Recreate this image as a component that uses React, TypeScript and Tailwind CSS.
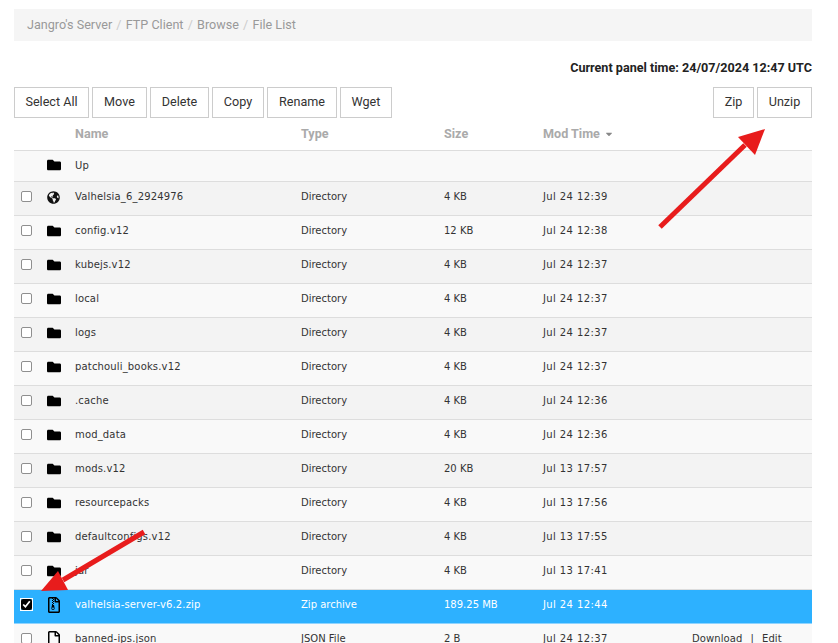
import React from "react";
import { FaFolder, FaGlobeAmericas, FaRegFileArchive, FaRegFile, FaCaretDown } from "react-icons/fa";

type Row = { name: string; type: string; size: string; time: string; icon: "folder" | "globe" | "zip" | "file"; selected?: boolean; actions?: boolean };

const rows: Row[] = [
  { name: "Valhelsia_6_2924976", type: "Directory", size: "4 KB", time: "Jul 24 12:39", icon: "globe" },
  { name: "config.v12", type: "Directory", size: "12 KB", time: "Jul 24 12:38", icon: "folder" },
  { name: "kubejs.v12", type: "Directory", size: "4 KB", time: "Jul 24 12:37", icon: "folder" },
  { name: "local", type: "Directory", size: "4 KB", time: "Jul 24 12:37", icon: "folder" },
  { name: "logs", type: "Directory", size: "4 KB", time: "Jul 24 12:37", icon: "folder" },
  { name: "patchouli_books.v12", type: "Directory", size: "4 KB", time: "Jul 24 12:37", icon: "folder" },
  { name: ".cache", type: "Directory", size: "4 KB", time: "Jul 24 12:36", icon: "folder" },
  { name: "mod_data", type: "Directory", size: "4 KB", time: "Jul 24 12:36", icon: "folder" },
  { name: "mods.v12", type: "Directory", size: "20 KB", time: "Jul 13 17:57", icon: "folder" },
  { name: "resourcepacks", type: "Directory", size: "4 KB", time: "Jul 13 17:56", icon: "folder" },
  { name: "defaultconfigs.v12", type: "Directory", size: "4 KB", time: "Jul 13 17:55", icon: "folder" },
  { name: "jar", type: "Directory", size: "4 KB", time: "Jul 13 17:41", icon: "folder" },
  { name: "valhelsia-server-v6.2.zip", type: "Zip archive", size: "189.25 MB", time: "Jul 24 12:44", icon: "zip", selected: true },
  { name: "banned-ips.json", type: "JSON File", size: "2 B", time: "Jul 24 12:37", icon: "file", actions: true },
];

function Icon({ kind }: { kind: Row["icon"] }) {
  if (kind === "folder") return <FaFolder className="w-[14px] h-[14px] text-black" />;
  if (kind === "globe") return <FaGlobeAmericas className="w-[13px] h-[13px] text-[#111]" />;
  if (kind === "zip") return <FaRegFileArchive className="w-[14px] h-[16px] text-black" />;
  return <FaRegFile className="w-[14px] h-[16px] text-black" />;
}

function Btn({ label, w }: { label: string; w: string }) {
  return (
    <button className={`h-[31px] ${w} border border-[#ccc] bg-white text-[12.6px] text-[#333] pb-[1px] flex items-center justify-center`}>
      {label}
    </button>
  );
}

function Cells({ row, index }: { row: Row; index: number }) {
  const text = row.selected ? "text-white" : "text-[#333]";
  return (
    <div
      className={`h-[34px] shrink-0 flex items-center border-b pb-[4px] font-['DejaVu_Sans',sans-serif] text-[10px] ${text} ${
        row.selected ? "bg-[#2db1ff] border-[#8fd4ff]" : index % 2 === 0 ? "bg-[#f3f3f3] border-[#ddd]" : "bg-[#f9f9f9] border-[#ddd]"
      }`}
    >
      <div className="w-[33px] pl-[7px] flex items-center">
        {row.selected ? (
          <input type="checkbox" readOnly checked className="w-[11px] h-[11px] m-0 accent-black outline outline-1 outline-white" />
        ) : (
          <input type="checkbox" readOnly checked={false} className="w-[11px] h-[11px] m-0 appearance-none bg-white border border-[#8f8f8f] rounded-[2px]" />
        )}
      </div>
      <div className="w-[28px] flex justify-start mt-[1px]"><Icon kind={row.icon} /></div>
      <div className="w-[226px] whitespace-nowrap tracking-[0.16px]">{row.name}</div>
      <div className="w-[143px] whitespace-nowrap">{row.type}</div>
      <div className="w-[99px] whitespace-nowrap">{row.size}</div>
      <div className="w-[149px] whitespace-nowrap tracking-[0.4px]">{row.time}</div>
      {row.actions && (
        <div className="whitespace-nowrap flex gap-[8px] tracking-[0.1px]"><span>Download</span><span>|</span><span>Edit</span></div>
      )}
    </div>
  );
}

export default function App() {
  return (
    <div className="relative h-screen overflow-hidden bg-white pl-[14px] pr-[26px] pt-[9px] font-['Roboto',sans-serif] flex flex-col">
      <div className="h-[32px] shrink-0 bg-[#f5f5f5] px-[13px] flex items-center text-[12.6px] text-[#999] whitespace-nowrap">
        <span>Jangro's Server</span>
        <span className="mx-[4.2px] text-[#ccc]">/</span>
        <span>FTP Client</span>
        <span className="mx-[4.2px] text-[#ccc]">/</span>
        <span>Browse</span>
        <span className="mx-[4.2px] text-[#ccc]">/</span>
        <span>File List</span>
      </div>

      <div className="mt-[17px] h-[20px] shrink-0 flex items-center justify-end text-[12.6px] font-bold text-[#222]">
        Current panel time: 24/07/2024 12:47 UTC
      </div>

      <div className="mt-[9px] shrink-0 flex justify-between">
        <div className="flex gap-[3px]">
          <Btn label="Select All" w="w-[75px]" />
          <Btn label="Move" w="w-[55px]" />
          <Btn label="Delete" w="w-[59px]" />
          <Btn label="Copy" w="w-[52px]" />
          <Btn label="Rename" w="w-[70px]" />
          <Btn label="Wget" w="w-[52px]" />
        </div>
        <div className="flex gap-[3px]">
          <Btn label="Zip" w="w-[41px]" />
          <Btn label="Unzip" w="w-[55px]" />
        </div>
      </div>

      <div className="h-[33px] shrink-0 flex items-center border-b border-[#ddd] text-[12.6px] font-bold text-[#aaa] whitespace-nowrap">
        <div className="w-[61px]" />
        <div className="w-[226px]">Name</div>
        <div className="w-[143px]">Type</div>
        <div className="w-[99px]">Size</div>
        <div className="flex items-center gap-[4px]">Mod Time <FaCaretDown className="w-[10px] h-[10px] text-[#888]" /></div>
      </div>

      <div className="h-[31px] shrink-0 flex items-center border-b border-[#ddd] bg-[#f9f9f9] pb-[2px] font-['DejaVu_Sans',sans-serif] text-[10px] tracking-[0.16px] text-[#333]">
        <div className="w-[33px]" />
        <div className="w-[28px] flex justify-start"><Icon kind="folder" /></div>
        <div>Up</div>
      </div>

      {rows.map((r, i) => (
        <Cells key={r.name} row={r} index={i} />
      ))}

      <svg className="absolute inset-0 pointer-events-none" width="838" height="643" viewBox="0 0 838 643">
        <line x1="660" y1="227" x2="745" y2="145" stroke="#e81c1c" strokeWidth="5" />
        <polygon points="765,129 755,155 738,137" fill="#e81c1c" />
        <line x1="144" y1="532" x2="63" y2="580" stroke="#e81c1c" strokeWidth="5" />
        <polygon points="41,591 58,571 68,590" fill="#e81c1c" />
      </svg>
    </div>
  );
}
